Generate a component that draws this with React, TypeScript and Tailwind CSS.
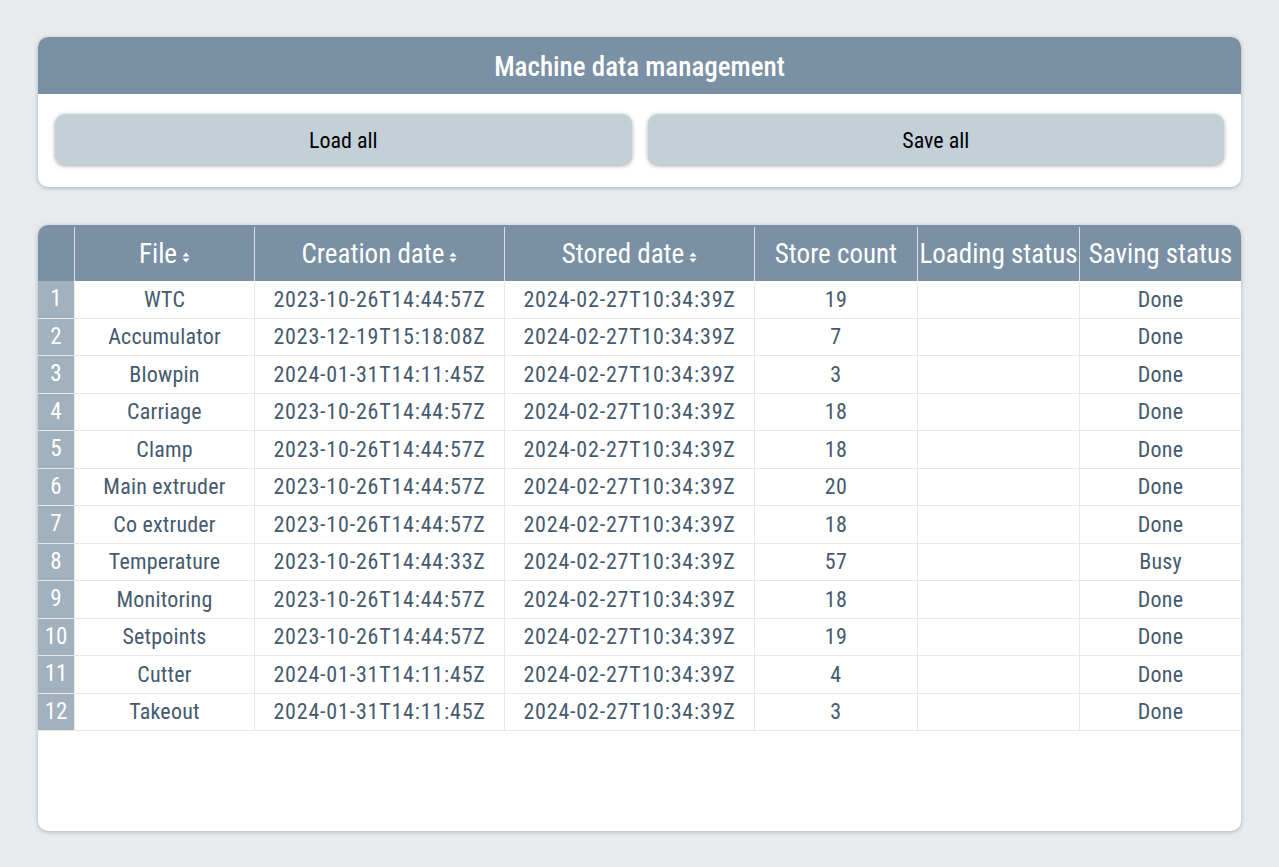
import React from "react";

const rows = [
  ["WTC", "2023-10-26T14:44:57Z", "2024-02-27T10:34:39Z", "19", "", "Done"],
  ["Accumulator", "2023-12-19T15:18:08Z", "2024-02-27T10:34:39Z", "7", "", "Done"],
  ["Blowpin", "2024-01-31T14:11:45Z", "2024-02-27T10:34:39Z", "3", "", "Done"],
  ["Carriage", "2023-10-26T14:44:57Z", "2024-02-27T10:34:39Z", "18", "", "Done"],
  ["Clamp", "2023-10-26T14:44:57Z", "2024-02-27T10:34:39Z", "18", "", "Done"],
  ["Main extruder", "2023-10-26T14:44:57Z", "2024-02-27T10:34:39Z", "20", "", "Done"],
  ["Co extruder", "2023-10-26T14:44:57Z", "2024-02-27T10:34:39Z", "18", "", "Done"],
  ["Temperature", "2023-10-26T14:44:33Z", "2024-02-27T10:34:39Z", "57", "", "Busy"],
  ["Monitoring", "2023-10-26T14:44:57Z", "2024-02-27T10:34:39Z", "18", "", "Done"],
  ["Setpoints", "2023-10-26T14:44:57Z", "2024-02-27T10:34:39Z", "19", "", "Done"],
  ["Cutter", "2024-01-31T14:11:45Z", "2024-02-27T10:34:39Z", "4", "", "Done"],
  ["Takeout", "2024-01-31T14:11:45Z", "2024-02-27T10:34:39Z", "3", "", "Done"],
];

const widths = ["w-[180px]", "w-[250px]", "w-[250px]", "w-[163px]", "w-[162px]", "flex-1"];
const tracking = ["tracking-[0.2px]", "tracking-[0.8px]", "tracking-[0.8px]", "tracking-[0.5px]", "", "tracking-[0.2px]"];

function SortIcon() {
  return (
    <svg width="8" height="13" viewBox="0 0 8 13" className="ml-[5px] mt-[6px]">
      <path d="M0.5 5.5 L4 1.5 L7.5 5.5 Z" fill="white" />
      <path d="M0.5 7.5 L4 11.5 L7.5 7.5 Z" fill="white" />
    </svg>
  );
}

function Head({ label, sort, w }: { label: string; sort?: boolean; w: string }) {
  return (
    <div className={`${w} flex items-center justify-center border-l border-white/70 whitespace-nowrap`}>
      <span>{label}</span>
      {sort && <SortIcon />}
    </div>
  );
}

export default function App() {
  return (
    <div
      className="min-h-[867px] bg-[#e7ebee] px-[38px] pt-[37px] font-stretch-condensed"
      style={{ fontFamily: "Roboto, 'Liberation Sans', sans-serif" }}
    >
      <div className="bg-white rounded-[10px] shadow-[0_1px_4px_rgba(0,0,0,0.25)] overflow-hidden">
        <div className="h-[57px] bg-[#7a90a4] text-white text-[27px] font-medium flex items-center justify-center pt-[3px]">
          Machine data management
        </div>
        <div className="flex gap-4 px-[17px] pt-5 pb-[22px]">
          <button className="flex-1 h-[51px] rounded-[10px] bg-[#c4d0d8] text-black text-[22px] pt-[2px] shadow-[0_1px_4px_rgba(0,0,0,0.35)]">
            Load all
          </button>
          <button className="flex-1 h-[51px] rounded-[10px] bg-[#c4d0d8] text-black text-[22px] pt-[2px] shadow-[0_1px_4px_rgba(0,0,0,0.35)]">
            Save all
          </button>
        </div>
      </div>

      <div className="mt-[38px] h-[606px] bg-white rounded-[10px] shadow-[0_1px_4px_rgba(0,0,0,0.25)] overflow-hidden">
        <div className="h-[56px] bg-[#7a90a4] text-white text-[27px] flex pt-[2px]">
          <div className="w-[36px]" />
          <Head label="File" sort w={widths[0]} />
          <Head label="Creation date" sort w={widths[1]} />
          <Head label="Stored date" sort w={widths[2]} />
          <Head label="Store count" w={widths[3]} />
          <Head label="Loading status" w={widths[4]} />
          <Head label="Saving status" w={widths[5]} />
        </div>
        {rows.map((r, i) => (
          <div key={i} className="h-[37.5px] flex border-b border-[#e8e8e8] text-[22px] text-[#465a6e]">
            <div className="w-[36px] bg-[#a1b1be] text-white text-[23px] flex items-center justify-center">
              {i + 1}
            </div>
            {r.map((c, j) => (
              <div
                key={j}
                className={`${widths[j]} ${tracking[j]} flex items-center justify-center border-l border-[#e8e8e8]`}
              >
                {c}
              </div>
            ))}
          </div>
        ))}
      </div>
    </div>
  );
}
